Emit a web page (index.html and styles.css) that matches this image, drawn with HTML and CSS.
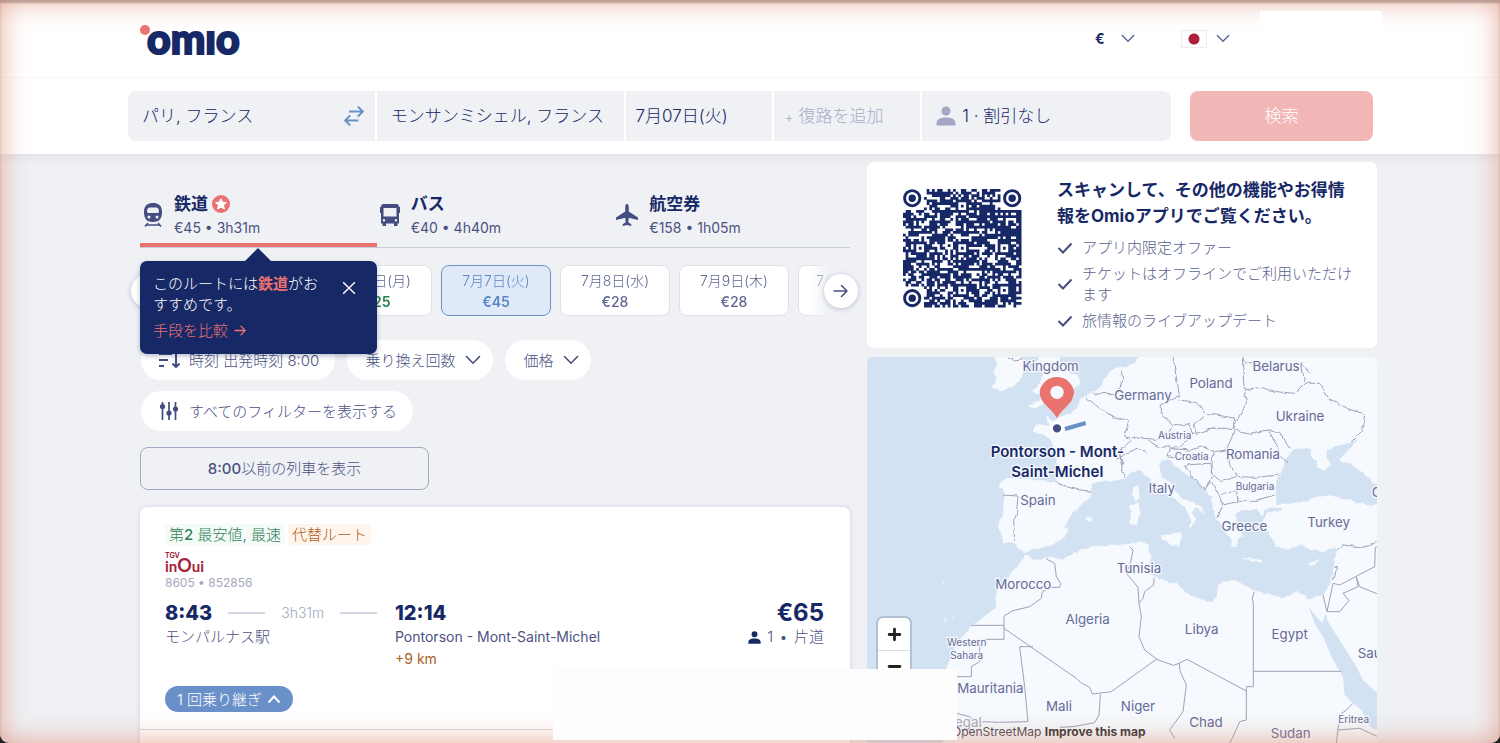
FILE: index.html
```html
<!DOCTYPE html>
<html lang="ja">
<head>
<meta charset="utf-8">
<meta name="viewport" content="width=device-width, initial-scale=1">
<title>Omio</title>
<link rel="stylesheet" href="styles.css">
</head>
<body>
<svg class="sprite" aria-hidden="true">
  <symbol id="chevron" viewBox="0 0 16 10"><path d="M1.500 1.500 8 8.200l6.500-6.700" fill="none" stroke="currentColor" stroke-width="1.600" stroke-linecap="round"/></symbol>
  <symbol id="person" viewBox="0 0 20 20"><circle cx="10" cy="5" r="4.500"/><path d="M.5 19.500v-2C.5 13.500 4 11.500 10 11.500s9.500 2 9.500 6v2z"/></symbol>
  <symbol id="check" viewBox="0 0 16 12"><path d="M1.500 6 6 10.500 14.500 1.500" fill="none" stroke="currentColor" stroke-width="2"/></symbol>
  <symbol id="arrow" viewBox="0 0 16 14"><path d="M1 7h13M8.500 1.500 14 7l-5.500 5.500" fill="none" stroke="currentColor" stroke-width="1.600" stroke-linecap="round" stroke-linejoin="round"/></symbol>
</svg>
<div class="app">
  <header class="top">
    <a class="logo" href="#" aria-label="Omio"><span class="logo-dot"></span><span class="logo-word">omıo</span></a>
    <div class="prefs">
      <label class="currency"><select aria-label="通貨"><option>€</option></select><svg class="chev"><use href="#chevron"/></svg></label>
      <button class="lang" type="button" aria-label="言語"><span class="flag"></span><svg class="chev"><use href="#chevron"/></svg></button>
    </div>
  </header>

  <form class="search">
    <div class="fields">
      <div class="field wide first">
        <input type="text" aria-label="出発地" value="パリ, フランス">
        <button class="swap" type="button" aria-label="入れ替え"><svg viewBox="0 0 20 20"><path d="M5.500 6H18M13.500 1.500 18 6l-4.500 4.500M14 14H2M6.500 9.500 2 14l4.500 4.500" fill="none" stroke="currentColor" stroke-width="1.800"/></svg></button>
      </div>
      <div class="field wide"><input type="text" aria-label="目的地" value="モンサンミシェル, フランス"></div>
      <button class="field date" type="button">7月07日(火)</button>
      <button class="field date muted" type="button"><span class="plus">+</span> 復路を追加</button>
      <button class="field wide people" type="button"><svg class="who"><use href="#person"/></svg>1 · 割引なし</button>
    </div>
    <button class="go" type="submit">検索</button>
  </form>

  <main class="main">
    <section class="left">
      <nav class="tabs">
        <div class="tab-wrap">
          <button class="tab active" type="button">
            <svg class="tab-icon" viewBox="0 0 20 24"><path fill-rule="evenodd" d="M10 0c5 0 9 2 9 9 0 6-2 10-9 10S1 15 1 9C1 2 5 0 10 0zM6.500 4.500Q4 5 4 8.500q0 1.500 1.500 1.500h9Q16 10 16 8.500q0-3.500-2.500-4zM6 12.500a1.500 1.500 0 1 0 0 3 1.500 1.500 0 0 0 0-3zm8 0a1.500 1.500 0 1 0 0 3 1.500 1.500 0 0 0 0-3z"/><path d="M5 20 2 23.500M15 20l3 3.500M3.500 22h13" stroke="currentColor" stroke-width="1.500"/></svg>
            <span class="tab-text"><span class="tab-name">鉄道 <svg class="star" viewBox="0 0 18 18"><circle cx="9" cy="9" r="9" fill="#ea7370"/><path fill="#fff" stroke="#fff" stroke-linejoin="round" d="m9 3.700 1.600 3.500 3.800.4-2.900 2.600.9 3.800L9 12l-3.400 2 .9-3.800-2.900-2.600 3.800-.4z"/></svg></span><span class="tab-info">€45 • 3h31m</span></span>
          </button>
          <div class="tip" role="status">
            <p class="tip-text">このルートには<b>鉄道</b>がおすすめです。</p>
            <a class="tip-link" href="#">手段を比較 <svg class="tip-arrow"><use href="#arrow"/></svg></a>
            <button class="tip-close" type="button" aria-label="閉じる"><svg viewBox="0 0 12 12"><path d="m1 1 10 10M11 1 1 11" stroke="currentColor" stroke-width="1.200"/></svg></button>
          </div>
        </div>
        <button class="tab" type="button">
          <svg class="tab-icon" viewBox="0 0 20 24"><path fill-rule="evenodd" d="M3.500 1h13Q19 1 19 4h1v6h-1v10.500h-1.500V23H14v-2.500H6V23H2.500v-2.500H1V10H0V4h1q0-3 2.500-3zM3.500 5v8.500h13V5zM4 16a1.200 1.200 0 1 0 0 2.400A1.200 1.200 0 0 0 4 16zm12 0a1.200 1.200 0 1 0 0 2.400 1.200 1.200 0 0 0 0-2.400z"/></svg>
          <span class="tab-text"><span class="tab-name">バス</span><span class="tab-info">€40 • 4h40m</span></span>
        </button>
        <button class="tab" type="button">
          <svg class="tab-icon plane" viewBox="0 0 22 22"><path d="M11 0q1.700 0 1.700 3v4.500L22 13.500V16l-9.300-2.200-.4 4.500 3 2V22L11 21l-4.300 1v-1.700l3-2-.4-4.500L0 16v-2.500l9.300-6V3Q9.300 0 11 0z"/></svg>
          <span class="tab-text"><span class="tab-name">航空券</span><span class="tab-info">€158 • 1h05m</span></span>
        </button>
      </nav>

      <div class="carousel">
        <div class="days">
          <button class="day" type="button">7月6日(月)<b class="cheap">€25</b></button>
          <button class="day current" type="button">7月7日(火)<b>€45</b></button>
          <button class="day" type="button">7月8日(水)<b>€28</b></button>
          <button class="day" type="button">7月9日(木)<b>€28</b></button>
          <button class="day" type="button">7月10日(金)<b>€28</b></button>
        </div>
        <button class="round prev" type="button" aria-label="前へ"></button>
        <button class="round next" type="button" aria-label="次へ"><svg><use href="#arrow"/></svg></button>
      </div>

      <div class="filters">
        <button class="chip" type="button"><svg class="chip-icon" viewBox="0 0 20 18"><path d="M0 3h13M0 9h9M0 15h5M17 2v14M13.500 12.500 17 16l3.500-3.500" fill="none" stroke="currentColor" stroke-width="2"/></svg>時刻 出発時刻 8:00</button>
        <button class="chip menu" type="button">乗り換え回数<svg class="chip-chev"><use href="#chevron"/></svg></button>
        <button class="chip menu" type="button">価格<svg class="chip-chev"><use href="#chevron"/></svg></button>
        <button class="chip" type="button"><svg class="chip-icon" viewBox="0 0 20 18"><path d="M3.500 0v18M10 0v18M16.500 0v18" stroke="currentColor" stroke-width="1.700"/><circle cx="3.500" cy="4.500" r="2.600"/><circle cx="10" cy="11" r="2.600"/><circle cx="16.500" cy="7" r="2.600"/></svg>すべてのフィルターを表示する</button>
      </div>

      <button class="earlier" type="button"><b>8:00</b>以前の列車を表示</button>

      <article class="trip">
        <div class="badges"><span class="badge green">第<b>2</b> 最安値, 最速</span><span class="badge orange">代替ルート</span></div>
        <div class="carrier" aria-label="TGV inOui"><span class="tgv">TGV</span><span class="inoui">in<span class="big-o">O</span>ui</span></div>
        <p class="numbers">8605 • 852856</p>
        <div class="route">
          <div class="leg">
            <div class="depart"><strong class="time">8:43</strong><i class="dash"></i><span class="length">3h31m</span><i class="dash"></i></div>
            <p class="station">モンパルナス駅</p>
          </div>
          <div>
            <strong class="time">12:14</strong>
            <p class="place">Pontorson - Mont-Saint-Michel</p>
            <p class="place far">+9 km</p>
          </div>
          <div class="fare">
            <strong class="price">€65</strong>
            <p class="station"><svg class="who-small"><use href="#person"/></svg>1 <span class="sep">•</span> 片道</p>
          </div>
        </div>
        <button class="changes" type="button">1 回乗り継ぎ <svg viewBox="0 0 14 9"><path d="m1.500 7.500 5.500-6 5.500 6" fill="none" stroke="currentColor" stroke-width="2"/></svg></button>
        <hr class="rule">
      </article>
    </section>

    <aside class="right">
      <section class="promo">
        <svg class="qr" id="qr" viewBox="0 0 46 46" role="img" aria-label="QRコード"></svg>
        <div class="promo-body">
          <h2>スキャンして、その他の機能やお得情報をOmioアプリでご覧ください。</h2>
          <ul>
            <li><svg class="tick"><use href="#check"/></svg>アプリ内限定オファー</li>
            <li><svg class="tick"><use href="#check"/></svg>チケットはオフラインでご利用いただけます</li>
            <li><svg class="tick"><use href="#check"/></svg>旅情報のライブアップデート</li>
          </ul>
        </div>
      </section>

      <section class="map" aria-label="地図">
        <svg class="map-art" viewBox="22 21 1530 1158" preserveAspectRatio="xMinYMin slice">
          <defs><filter id="rough" x="0" y="0" width="1600" height="1200" filterUnits="userSpaceOnUse"><feTurbulence type="fractalNoise" baseFrequency=".05" numOctaves="2" seed="4"/><feDisplacementMap in="SourceGraphic" scale="13" xChannelSelector="R" yChannelSelector="G"/></filter></defs>
          <g class="land" filter="url(#rough)">
            <path d="M400 15 412 40 400 70 412 88 396 112 425 124 455 110 482 92 492 50 485 15z"/>
            <path d="M540 15 530 45 548 68 542 100 518 122 545 132 540 148 503 172 530 175 560 158 600 160 645 142 632 124 662 105 655 76 630 70 612 50 595 15z"/>
            <path d="M840 15 825 42 785 50 750 62 735 90 718 115 690 130 660 150 655 172 628 192 600 200 578 212 560 198 566 228 540 222 522 230 524 246 556 256 578 280 586 310 592 345 588 395 520 388 440 384 424 392 420 408 434 430 430 490 414 525 430 576 462 578 488 604 500 606 520 596 570 590 600 570 628 545 616 528 642 482 690 446 697 424 696 402 730 392 795 390 810 370 840 360 862 382 880 402 915 430 945 448 975 472 986 492 992 515 984 538 996 530 1010 506 996 490 1006 474 1036 490 1026 470 986 450 962 440 940 410 905 375 898 345 914 328 932 330 950 352 980 372 1010 396 1040 420 1056 440 1060 480 1076 510 1096 545 1110 560 1116 592 1134 590 1134 566 1150 560 1134 530 1124 492 1140 482 1190 478 1210 500 1215 480 1250 466 1250 400 1264 370 1272 335 1302 298 1340 294 1360 300 1350 322 1372 330 1372 350 1392 362 1414 344 1400 325 1402 300 1440 288 1490 270 1470 300 1438 326 1476 346 1512 370 1540 400 1590 425V-5H840z"/>
            <path d="M1590 460 1520 466 1470 450 1410 436 1370 440 1340 456 1290 460 1250 465 1235 474 1268 474 1264 482 1226 484 1210 510 1230 560 1252 590 1290 600 1320 586 1360 600 1390 606 1424 590 1432 604 1422 650 1412 700 1392 735 1350 745 1310 726 1270 744 1220 730 1180 720 1150 702 1120 690 1082 700 1070 730 1060 756 1020 746 980 730 960 706 886 682 860 655 876 622 862 600 870 586 840 572 810 582 730 586 660 600 610 626 570 620 520 632 506 614 495 610 480 640 450 675 422 708 408 740 410 772 370 800 340 825 300 870 270 930 252 975V1200H1590z"/>
            <path d="M820 412 836 406 840 440 828 456 820 440zM812 468 838 460 840 490 832 524 814 522zM905 556 966 550 958 592 905 566zM1152 624 1206 630 1204 638 1154 630zM1344 642 1380 626 1366 646 1350 646zM676 502 700 500 696 514 682 514z"/>
            <path d="M246 694h8v4h-8zM252 802l10 4-4 10zM280 798l6 3-8 14zM228 800h6v4z"/>
          </g>
          <path class="sea" d="M1347 770 1370 800 1388 820 1398 790 1405 815 1440 870 1465 910 1490 950 1510 990 1570 1045V1150L1530 1130 1505 1080 1480 1060 1455 1035 1450 980 1420 930 1390 860 1365 820z"/>
          <g class="border" filter="url(#rough)">
            <path d="M445 21 465 30 488 26M785 60 790 90 772 130 700 132M680 142 720 175 760 200 808 212 795 260 815 275 780 300 785 345 795 385M808 212 795 262 850 265 890 268 905 260 940 228 985 222 1000 250 960 290 900 292 860 270M940 21 948 70 960 140 905 160 905 190 940 228M960 150 1010 158 1040 190 1125 204 1120 235 1060 235 1010 250 1000 225 1035 200M1148 21 1152 100 1160 160 1130 215 1122 238M1150 30 1160 40 1180 38M1155 120 1200 112 1250 125 1305 130 1335 100 1325 40 1350 70M1335 100 1380 100 1410 150 1440 165 1515 195 1505 245 1475 275M1125 240 1170 250 1225 240 1260 250 1290 295M1225 240 1250 280 1262 320 1285 338M1125 242 1100 300 1060 305 1030 290 990 300 930 295 922 320 1000 330M1100 300 1112 350 1135 380 1190 382 1260 375M975 345 1050 340 1060 380 1035 420 1000 385zM1060 305 1055 370 1085 395 1130 380M1085 430 1130 425 1135 455 1088 465 1080 440 1055 395 1036 420M1135 450 1175 455 1210 445 1245 435M1088 465 1075 500M775 300 790 345M860 310 835 295 800 310 770 330M430 435 475 438 470 490 462 520 465 575M586 396 620 410 650 418 696 424M1430 600 1450 585 1500 590 1554 577M1425 650 1435 650 1420 690"/>
          </g>
          <path class="border" d="M560 627 585 640 590 680 603 700 600 712H575L548 725 545 745 510 770 460 782 433 798V868H360V935L335 950V980H290M335 826H433M433 835 650 985 662 997 690 1012 698 1032 755 1025 890 928 942 946 958 940 982 928 1160 1023V1010H1181V760L1178 745 1184 725M520 890H480L495 1010 503 1095 505 1115 420 1117 370 1115M722 1032 718 1095 705 1118 640 1130 600 1132M810 590 820 600 812 640 800 670 835 712 838 760 845 800 838 860 855 900 892 928M838 760 850 745 855 725 882 705 883 685M958 940 962 965 980 1005 970 1085 930 1140 945 1165M1160 1023V1110L1140 1115 1120 1160 1110 1179M1181 964H1445M1390 735 1402 785 1420 700 1440 705 1545 650 1547 592 1554 590M1402 785 1440 785 1468 752 1450 730 1495 710 1490 680 1500 710 1554 732M1430 1179 1440 1095 1460 1080 1480 1060M1435 1140 1500 1135 1554 1160M290 1090 330 1100 350 1115 370 1117"/>
          <g class="labels">
            <text x="573" y="62">Kingdom</text><text x="850" y="150">Germany</text><text x="1054" y="115">Poland</text><text x="1249" y="62">Belarus</text><text x="1321" y="213">Ukraine</text>
            <text class="small" x="945" y="267">Austria</text><text class="small" x="996" y="330">Croatia</text><text x="1180" y="327">Romania</text><text class="small" x="1186" y="420">Bulgaria</text>
            <text x="906" y="430">Italy</text><text x="1154" y="544">Greece</text><text x="1407" y="532">Turkey</text><text x="535" y="466">Spain</text><text x="838" y="669">Tunisia</text><text x="491" y="716">Morocco</text><text x="684" y="823">Algeria</text><text x="1026" y="852">Libya</text><text x="1290" y="866">Egypt</text>
            <text class="small" x="321" y="889">Western</text><text class="small" x="321" y="926">Sahara</text><text x="392" y="1028">Mauritania</text><text x="598" y="1084">Mali</text><text x="835" y="1083">Niger</text><text x="1039" y="1130">Chad</text><text x="1293" y="1165">Sudan</text><text class="small" x="1482" y="1119">Eritrea</text><text class="faint" x="290" y="1132">Senegal</text><text class="edge" x="1494" y="924">Saudi Arabia</text><text class="edge" x="1536" y="440">Georgia</text>
            <g class="stop"><text x="593" y="320">Pontorson - Mont-</text><text x="593" y="382">Saint-Michel</text></g>
          </g>
          <path d="m616 237 62-18" stroke="#6a90ca" stroke-width="12"/>
          <circle cx="592" cy="235" r="16" fill="#434d80" stroke="#fff" stroke-width="7"/>
          <path fill="#ea7370" fill-rule="evenodd" d="M592 204C574 172 540 160 540 125a52 51 0 0 1 103 0c0 35-33 47-51 79zM592 107a20 20 0 1 0 0 40 20 20 0 0 0 0-40z"/>
        </svg>
        <div class="zoomer"><button type="button" aria-label="拡大"><svg viewBox="0 0 14 14"><path d="M2 7h10M7 2v10" stroke="#222" stroke-width="2.600" stroke-linecap="round"/></svg></button><button type="button" aria-label="縮小"><svg viewBox="0 0 14 14"><path d="M2 7h10" stroke="#222" stroke-width="2.600" stroke-linecap="round"/></svg></button></div>
        <p class="credit"><a href="#">OpenStreetMap</a> <a href="#"><b>Improve this map</b></a></p>
      </section>
    </aside>
  </main>
  <div class="glow"></div>
  <div class="blank-top"></div>
  <div class="blank-bottom"></div>
</div>
<script src="qr.js"></script>
</body>
</html>
```
FILE: styles.css
```css
* { box-sizing: border-box; }
body { margin: 0; background: #fff; color: #4b5283; font: 300 15px/21px Inter, "Noto Sans CJK JP", sans-serif; }
button, input, select { font: inherit; color: inherit; border: 0; background: none; padding: 0; margin: 0; }
button { cursor: pointer; }
p, h2, ul { margin: 0; padding: 0; }
a { color: inherit; text-decoration: none; }
svg { fill: currentColor; flex: none; }
.sprite { position: absolute; width: 0; height: 0; }
.app { position: relative; display: flex; flex-direction: column; height: 100vh; overflow: hidden; background: #eff1f5; }

.top { position: relative; z-index: 3; flex: none; display: flex; justify-content: space-between; align-items: center; height: 78px; padding: 0 270px 0 140px; background: #fff; border-bottom: 1px solid #f6f6f8; }
.logo { position: relative; color: #172866; padding-left: 7px; }
.logo-word { font: 900 41px/48px Lato, sans-serif; -webkit-text-stroke: 2px #172866; }
.logo-dot { position: absolute; left: 0; top: 10px; width: 10px; height: 10px; border-radius: 50%; background: #ea7370; }
.prefs { display: flex; align-items: center; gap: 46px; color: #172866; }
.currency, .lang { display: flex; align-items: center; gap: 9px; }
.currency select { appearance: none; width: 17px; font-weight: 700; font-size: 14px; }
.chev { width: 14px; height: 9px; color: #5b6596; }
.flag { width: 26px; height: 18px; border: 1px solid #ececf0; background: radial-gradient(circle, #ae1f38 5px, #fff 6px); }

.search { position: relative; z-index: 2; flex: none; display: flex; gap: 19px; padding: 13px 127px 13px 128px; background: #fff; color: #172866; font-size: 17px; box-shadow: 0 1px 12px rgba(30, 35, 60, .1); }
.fields { flex: 1; display: grid; grid-template-columns: 247fr 247fr 147fr 146fr 249fr; gap: 2px; height: 50px; border-radius: 8px; overflow: hidden; }
.field { min-width: 0; display: flex; align-items: center; padding: 0 10px; background: #eff1f5; white-space: nowrap; }
.wide { padding: 0 14px; }
.first { padding-right: 10px; }
.field input { flex: 1; min-width: 0; outline: 0; }
.swap { width: 22px; height: 22px; color: #6a90ca; }
.swap svg { width: 22px; height: 22px; }
.muted { color: #a9adc5; gap: 5px; }
.plus { font-size: 14px; }
.people { gap: 6px; }
.who { width: 20px; height: 20px; color: #a4a6c4; }
.go { width: 183px; border-radius: 8px; background: #f3b6b7; color: #fff; }

.main { flex: 1; min-height: 0; display: grid; grid-template-columns: 71fr 51fr; grid-template-rows: minmax(0, 1fr); gap: 17px; padding: 8px 123px 0 140px; }
.left, .right { min-width: 0; display: flex; flex-direction: column; }
.left { padding-top: 28px; }

.tabs { position: relative; z-index: 4; flex: none; display: grid; grid-template-columns: repeat(3, 1fr); border-bottom: 1px solid #c9ccd8; }
.tab-wrap { position: relative; display: flex; }
.tab { flex: 1; display: flex; align-items: center; gap: 11px; height: 57px; padding: 0 0 8px 3px; text-align: left; }
.active { box-shadow: inset 0 -4px #ea7370; }
.tab-icon { width: 20px; height: 24px; color: #434d80; }
.plane { width: 22px; }
.tab-text { display: flex; flex-direction: column; }
.tab-name { display: flex; align-items: center; gap: 4px; font-weight: 700; font-size: 17px; line-height: 26px; color: #172866; }
.star { width: 18px; height: 18px; }
.tab-info { font-size: 14px; line-height: 22px; font-weight: 400; }

.tip { position: absolute; left: 0; right: 0; top: 71px; height: 93px; padding: 12px 13px; border-radius: 7px; background: #172866; color: #fff; box-shadow: 0 2px 5px rgba(20, 30, 80, .3); }
.tip::before { content: ""; position: absolute; left: 50%; top: -13px; margin-left: -13px; border: 13px solid transparent; border-top: 0; border-bottom-color: #172866; }
.tip-text { margin-right: 40px; }
.tip b, .tip-link { color: #ea7370; }
.tip b { font-weight: 700; }
.tip-link { display: inline-flex; align-items: center; gap: 6px; margin-top: 5px; }
.tip-arrow { width: 13px; height: 11px; }
.tip-close { position: absolute; right: 21px; top: 20px; width: 14px; height: 14px; }
.tip-close svg { display: block; width: 14px; height: 14px; }

.carousel { position: relative; flex: none; margin-top: 17px; }
.days { display: flex; gap: 9px; padding-left: 182px; margin-right: 20px; overflow: hidden; -webkit-mask-image: linear-gradient(to left, transparent 0, #000 20px); mask-image: linear-gradient(to left, transparent 0, #000 20px); }
.day { flex: 0 0 110px; height: 51px; border: 1px solid #dfe1e9; border-radius: 8px; background: #fff; font-size: 14px; line-height: 21px; color: #5f6590; }
.day b { display: block; font-weight: 500; }
.day .cheap { color: #268050; font-weight: 600; }
.day.current { background: #dfe9f7; border-color: #6a90ca; color: #5a85c6; }
.current b { font-weight: 600; }
.round { position: absolute; top: 9px; width: 34px; height: 34px; border-radius: 50%; background: #fff; box-shadow: 0 1px 5px rgba(30, 40, 90, .25); display: grid; place-items: center; }
.prev { left: -9px; }
.next { right: -8px; }
.round svg { width: 16px; height: 14px; }

.filters { flex: none; display: flex; flex-wrap: wrap; gap: 11px 12px; margin: 24px 0 0 1px; }
.chip { display: flex; align-items: center; gap: 10px; height: 40px; padding: 0 16px 0 18px; border-radius: 20px; background: #fff; }
.menu { padding: 0 12px 0 18px; }
.chip-icon { width: 20px; height: 18px; color: #434d80; overflow: visible; }
.chip-chev { width: 16px; height: 10px; color: #434d80; }

.earlier { flex: none; width: 289px; height: 43px; margin-top: 16px; border: 1px solid #a4a9c3; border-radius: 8px; }
.earlier b, .badge b { font-weight: 500; }

.trip { flex: none; margin-top: 17px; padding: 17px 0 20px; border-radius: 7px; background: #fff; box-shadow: 0 0 5px rgba(30, 40, 90, .15); }
.trip > * { margin-left: 25px; margin-right: 26px; }
.badges { display: flex; gap: 3px; }
.badge { padding: 0 4px; border-radius: 4px; }
.green { color: #2f8059; background: #f5fcf8; }
.orange { color: #b05a22; background: #fff5ec; }
.carrier { display: flex; flex-direction: column; margin-top: 8px; color: #a3243b; }
.tgv { font: 700 7px/6px Inter, sans-serif; }
.inoui { font: 700 15px/13px Lato, sans-serif; }
.big-o { font-size: 18px; }
.numbers { font-size: 12px; line-height: 20px; font-weight: 400; color: #a4a7c0; }
.route { display: grid; grid-template-columns: 230px 1fr auto; margin-top: 7px; }
.depart { display: flex; align-items: center; gap: 16px; }
.time { display: block; font-size: 20px; line-height: 26px; font-weight: 800; color: #172866; }
.dash { width: 37px; height: 2px; background: #d3d6e3; }
.length { font-size: 14px; line-height: 20px; color: #a4a7c0; }
.place { font-size: 14px; line-height: 22px; font-weight: 400; }
.station { font-size: 15px; line-height: 22px; }
.far { color: #a65f27; }
.fare { text-align: right; }
.price { display: block; font-size: 24px; line-height: 26px; font-weight: 700; color: #172866; }
.who-small { width: 13px; height: 13px; margin-right: 6px; vertical-align: -2px; color: #172866; }
.sep { margin: 0 2px; }
.changes { display: flex; align-items: center; gap: 5px; height: 26px; margin-top: 16px; padding: 0 12px; border-radius: 13px; background: #6a90ca; color: #fff; }
.changes svg { width: 14px; height: 9px; }
.trip .rule { margin: 17px 0 0; border: 0; border-top: 1px solid #d9dbe3; }

.promo { flex: none; display: flex; gap: 33px; padding: 15px 20px 17px 36px; border-radius: 7px; background: #fff; position: relative; z-index: 3; }
.qr { width: 121px; height: 121px; margin-top: 12px; color: #172866; }
.promo h2 { font-size: 17px; line-height: 26px; font-weight: 700; color: #172866; }
.promo ul { list-style: none; display: grid; gap: 5px; margin-top: 8px; }
.promo li { display: flex; align-items: center; gap: 9px; color: #5b628f; }
.tick { width: 16px; height: 12px; color: #434d80; }

.map { position: relative; flex: 1; min-height: 0; margin-top: 9px; border-radius: 5px 5px 0 0; overflow: hidden; background: #d3e2f3; }
.map-art { display: block; width: 100%; height: 100%; }
.land { fill: #f6f9fd; }
.sea { fill: #d3e2f3; }
.border { fill: none; stroke: #9da2b8; stroke-width: 3px; }
.labels { font-size: 40px; font-weight: 400; text-anchor: middle; fill: #656b98; stroke: #f6f9fd; stroke-width: 7px; paint-order: stroke; }
.small { font-size: 30px; }
.faint { fill: #a7aabd; }
.edge { text-anchor: start; }
.stop { font-size: 45px; font-weight: 600; fill: #172866; }
.zoomer { position: absolute; left: 11px; top: 261px; width: 32px; border-radius: 5px; background: #fff; box-shadow: 0 0 0 2px rgba(80, 90, 120, .25); }
.zoomer button { display: grid; place-items: center; width: 32px; height: 32px; }
.zoomer button + button { border-top: 1px solid #ddd; }
.zoomer svg { width: 15px; height: 15px; }
.credit { position: absolute; left: 85px; bottom: 1px; color: #4a4a55; font-size: 12px; font-weight: 400; line-height: 20px; white-space: nowrap; }
.credit b { color: #333; font-weight: 700; }

.glow { position: absolute; z-index: 5; inset: 0; pointer-events: none; border-radius: 0 0 9px 9px; box-shadow: inset 0 3px 2px rgba(140, 105, 98, .5), inset 0 0 28px rgba(222, 140, 115, .75), 0 0 0 9px #222; }
.blank-top { position: absolute; z-index: 8; right: 118px; top: 11px; width: 122px; height: 20px; background: #fff; }
.blank-bottom { position: absolute; z-index: 8; left: 553px; bottom: 3px; width: 404px; height: 71px; background: #fdfdfd; }
```
FILE: qr.js
```js
// Version 7 symbol: 45 modules a side, alignment patterns every 16 modules.
(function () {
  var n = 45, seed = 7, d = '';
  function rnd() { seed = (seed * 16807) % 2147483647; return seed / 2147483647; }
  var centres = [[22, 6], [6, 22], [22, 22], [38, 22], [22, 38], [38, 38]];
  for (var y = 0; y < n; y++) {
    for (var x = 0; x < n; x++) {
      var on = rnd() < 0.66;
      if (x > 28 && x < 35 && y > 5 && y < 15) on = rnd() < 0.95;
      centres.forEach(function (c) {
        var r = Math.max(Math.abs(x - c[0]), Math.abs(y - c[1]));
        if (r < 3) on = r !== 1;
      });
      if ((x < 8 && y < 8) || (x > n - 9 && y < 8) || (x < 8 && y > n - 9)) on = false;
      if (on) d += 'M' + x + ' ' + y + 'h1.050v1.050h-1.050z';
    }
  }
  var out = '<path d="' + d + '"/>';
  [[3.5, 3.5], [41.5, 3.5], [3.5, 41.5]].forEach(function (p) {
    out += '<circle cx="' + p[0] + '" cy="' + p[1] + '" r="2.900" fill="none" stroke="currentColor" stroke-width="1.100"/><circle cx="' + p[0] + '" cy="' + p[1] + '" r="1.400"/>';
  });
  document.getElementById('qr').innerHTML = out;
})();
```
